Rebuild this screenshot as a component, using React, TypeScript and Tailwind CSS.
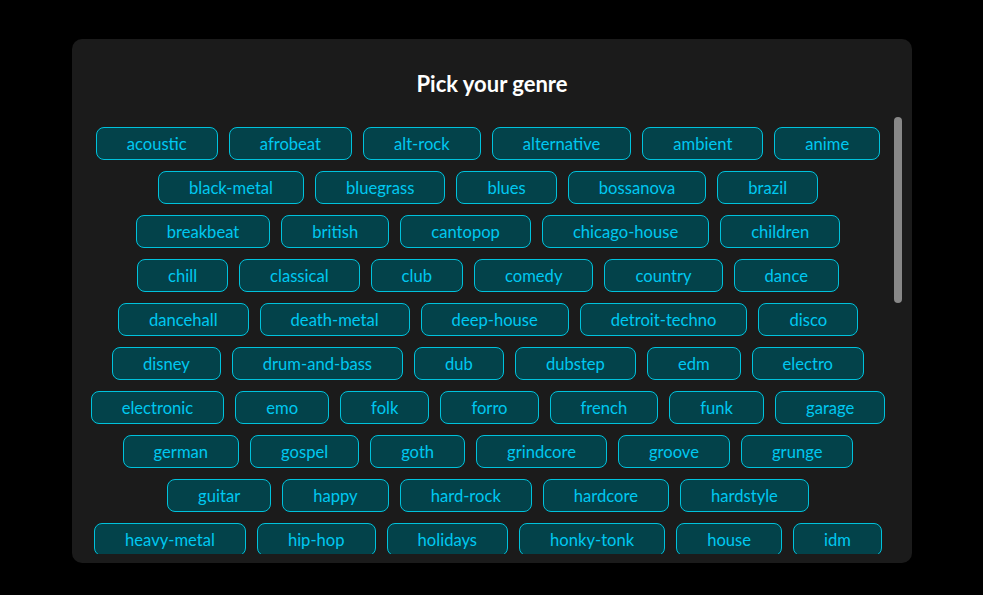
import React from "react";

const genres = [
  "acoustic","afrobeat","alt-rock","alternative","ambient","anime","black-metal","bluegrass","blues","bossanova","brazil","breakbeat","british","cantopop","chicago-house","children","chill","classical","club","comedy","country","dance","dancehall","death-metal","deep-house","detroit-techno","disco","disney","drum-and-bass","dub","dubstep","edm","electro","electronic","emo","folk","forro","french","funk","garage","german","gospel","goth","grindcore","groove","grunge","guitar","happy","hard-rock","hardcore","hardstyle","heavy-metal","hip-hop","holidays","honky-tonk","house","idm","indian","indie","indie-pop","industrial","iranian","j-dance","j-idol","j-pop","j-rock","jazz","k-pop","kids","latin","latino","malay","mandopop","metal","metal-misc","metalcore","minimal-techno","movies","mpb","new-age","new-release","opera","pagode","party","philippines-opm","piano","pop","pop-film","post-dubstep","power-pop","progressive-house","psych-rock","punk","punk-rock","r-n-b","rainy-day","reggae","reggaeton","road-trip","rock","rock-n-roll","rockabilly","romance","sad","salsa","samba","sertanejo","show-tunes","singer-songwriter","ska","sleep","songwriter","soul","soundtracks","spanish","study","summer","swedish","synth-pop","tango","techno","trance","trip-hop","turkish","work-out","world-music",
];

export default function App() {
  return (
    <div
      className="w-[983px] h-[595px] bg-black pt-[39px] pl-[72px]"
      style={{ fontFamily: "Lato, 'Open Sans', sans-serif" }}
    >
      <div className="w-[840px] h-[524px] bg-[#1b1b1b] rounded-[10px] flex flex-col pt-[32px] pb-[9px] pl-[10px] pr-[10px]">
        <h1 className="text-center text-white font-bold text-[22px] leading-[26px]">
          Pick your genre
        </h1>
        <div className="mt-[20px] flex-1 min-h-0 flex">
          <div className="flex-1 min-w-0 overflow-hidden px-[8px]">
            <div className="flex flex-wrap justify-center gap-[11px] pt-[10px] pb-[10px]">
              {genres.map((g) => (
                <button
                  key={g}
                  className="h-[33px] px-[30px] pt-[1px] rounded-[8px] border border-[#00c2dc] bg-[#03424a] text-[#00c8f0] text-[16.6px] leading-[20px] flex items-center justify-center"
                >
                  {g}
                </button>
              ))}
            </div>
          </div>
          <div className="w-[8px] shrink-0">
            <div className="h-[186px] w-[8px] rounded-full bg-[#888]" />
          </div>
        </div>
      </div>
    </div>
  );
}
